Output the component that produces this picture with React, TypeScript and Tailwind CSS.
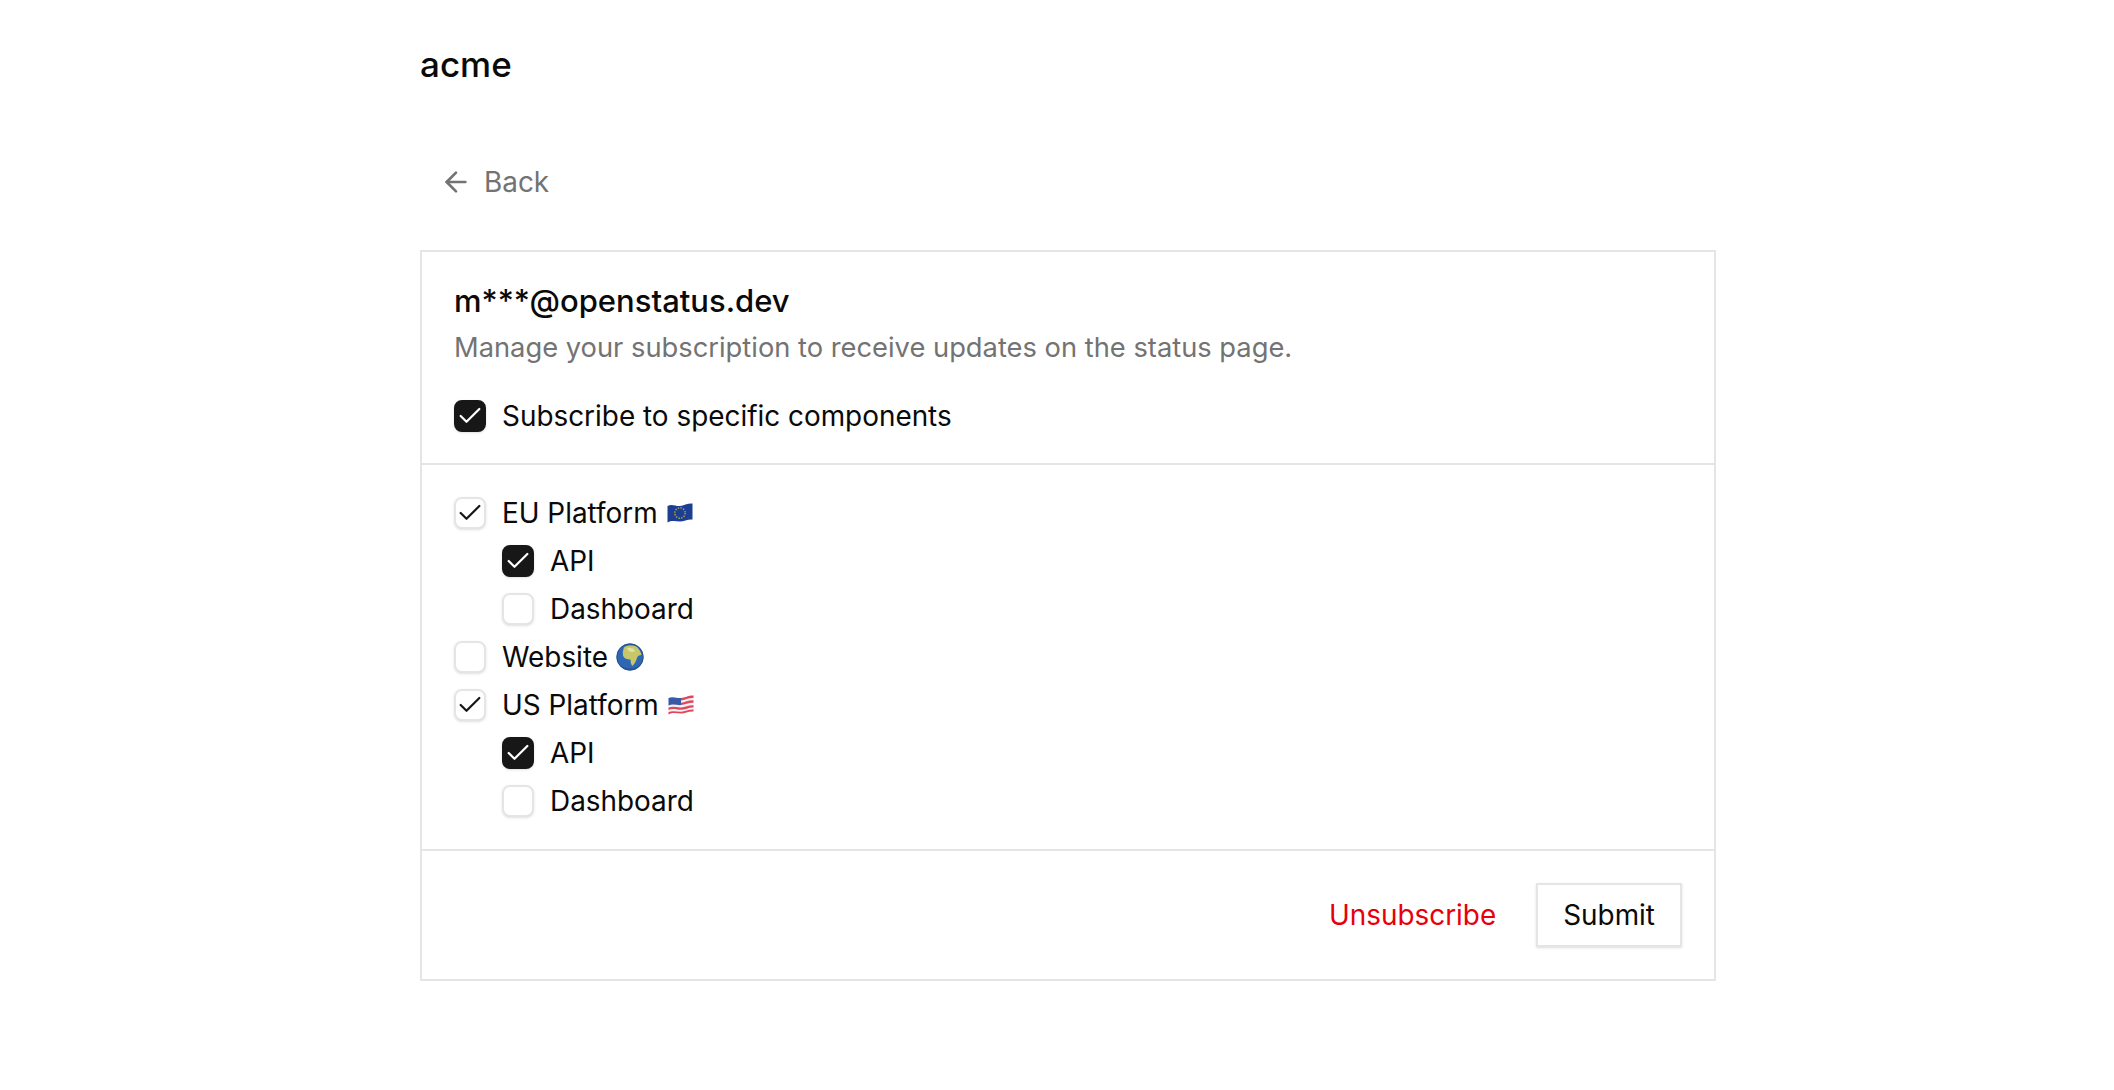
import React from "react";
import { ArrowLeft, Check } from "lucide-react";

function Box({ state }: { state: "dark" | "light" | "empty" }) {
  const cls =
    state === "dark"
      ? "bg-[#171717] border-[#171717] text-white"
      : "bg-white border-[#e5e5e5] text-[#171717]";
  return (
    <span className={`flex h-8 w-8 shrink-0 items-center justify-center rounded-lg border-2 shadow-sm ${cls}`}>
      {state !== "empty" && <Check size={28} strokeWidth={1.9} />}
    </span>
  );
}

const WAVE = "M0.5 3C5 0.5 9 3.5 13 3S21 0 25.5 0.5V16.5C21 16 17 18.5 13 18.5S5 17 0.5 19.5Z";

function EU() {
  return (
    <svg width="26" height="20" viewBox="0 0 26 20" className="ml-[9px]">
      <path d={WAVE} fill="#1d3f93" />
      <circle cx="13" cy="10" r="5.2" fill="none" stroke="#b9a63c" strokeWidth="1.4" strokeDasharray="1.4 1.3" />
    </svg>
  );
}
function US() {
  return (
    <svg width="26" height="20" viewBox="0 0 26 20" className="ml-[9px]">
      <path d={WAVE} fill="#f3f3f6" />
      <path d="M13 3C17 2.7 21 0 25.5 0.5V3C21 2.6 17 5 13 5.4Z" fill="#e0475a" />
      <path d="M13 7.8C17 7.4 21 5.1 25.5 5.4V7.8C21 7.6 17 9.8 13 10.1Z" fill="#e0475a" />
      <path d="M0.5 12.6C5 10.8 9 12.6 13 12.4S21 10 25.5 10.2V12.5C21 12.4 17 14.8 13 14.8S5 13 0.5 14.9Z" fill="#e0475a" />
      <path d="M0.5 17.1C5 15.3 9 16.9 13 16.8S21 14.4 25.5 14.6V16.5C21 16 17 18.5 13 18.5S5 17 0.5 19.5Z" fill="#e0475a" />
      <path d="M0.5 3C5 1 9 3.5 13 3V10.1C9 10.4 5 8.4 0.5 10.4Z" fill="#3a5aa8" />
    </svg>
  );
}
function Globe() {
  return (
    <svg width="28" height="28" viewBox="0 0 28 28" className="ml-2">
      <circle cx="14" cy="14" r="13.5" fill="#2e68b5" />
      <path d="M8 4.5C11 2 17 2 21 4C23 6 25 9 25.5 12C23 12 21.5 13 21 15C20 18 18.5 21 16.5 23C15 21.5 14.5 19 14.5 16.5C11 16.5 8 15.5 7 12.5C6.5 9.5 7 7 8 4.5Z" fill="#c7c76a" />
      <path d="M11 5C14 4 18 5 19 8C16 10 12 9 11 5Z" fill="#e3dfa4" />
      <circle cx="14" cy="14" r="13.2" fill="none" stroke="#23487c" strokeWidth="0.8" />
      <path d="M4 22C9 27 19 27 24 22C20 27.5 8 27.5 4 22Z" fill="#1c3560" />
    </svg>
  );
}

function Row({ state, label, icon, nested }: { state: "dark" | "light" | "empty"; label: string; icon?: React.ReactNode; nested?: boolean }) {
  return (
    <div className={`flex h-12 items-center gap-4 ${nested ? "pl-12" : ""}`}>
      <Box state={state} />
      <span className="flex items-center">
        {label}
        {icon}
      </span>
    </div>
  );
}

export default function App() {
  return (
    <div
      className="min-h-[1090px] bg-white text-[27.9px] leading-10 text-[#0a0a0a]"
      style={{ fontFamily: "Inter, 'Noto Sans', sans-serif" }}
    >
      <div className="ml-[420px] w-[1296px]">
        <div className="flex h-[128px] items-center text-[35px] font-[550]">acme</div>
        <div className="mt-[30px] flex h-12 w-fit items-center gap-3 px-5 text-[#737373]">
          <ArrowLeft size={32} strokeWidth={2} />
          <span>Back</span>
        </div>
        <div className="mt-[44px] border-2 border-[#e5e5e5]">
          <div className="border-b-2 border-[#e5e5e5] px-8 pt-[31px] pb-[31px]">
            <div className="text-[31px] leading-9 font-[550]">m***@openstatus.dev</div>
            <div className="mt-[9px] text-[27.3px] text-[#737373]">Manage your subscription to receive updates on the status page.</div>
            <div className="mt-8 flex h-8 items-center gap-4">
              <Box state="dark" />
              <span>Subscribe to specific components</span>
            </div>
          </div>
          <div className="border-b-2 border-[#e5e5e5] px-8 py-6">
            <Row state="light" label="EU Platform" icon={<EU />} />
            <Row state="dark" label="API" nested />
            <Row state="empty" label="Dashboard" nested />
            <Row state="empty" label="Website" icon={<Globe />} />
            <Row state="light" label="US Platform" icon={<US />} />
            <Row state="dark" label="API" nested />
            <Row state="empty" label="Dashboard" nested />
          </div>
          <div className="flex items-center justify-end gap-10 p-8">
            <span className="text-[#e7000b]">Unsubscribe</span>
            <div className="flex h-16 items-center border-2 border-[#e5e5e5] px-[25px] shadow-sm">Submit</div>
          </div>
        </div>
      </div>
    </div>
  );
}
